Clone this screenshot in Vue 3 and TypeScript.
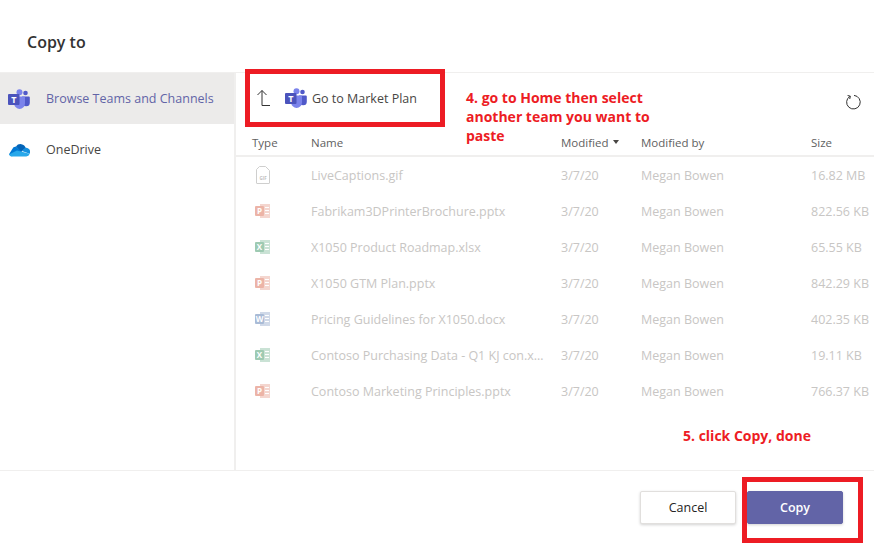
<script setup lang="ts">
type FileKind = "gif" | "ppt" | "xls" | "doc";

interface FileRow {
  kind: FileKind;
  name: string;
  size: string;
}

const files: FileRow[] = [
  { kind: "gif", name: "LiveCaptions.gif", size: "16.82 MB" },
  { kind: "ppt", name: "Fabrikam3DPrinterBrochure.pptx", size: "822.56 KB" },
  { kind: "xls", name: "X1050 Product Roadmap.xlsx", size: "65.55 KB" },
  { kind: "ppt", name: "X1050 GTM Plan.pptx", size: "842.29 KB" },
  { kind: "doc", name: "Pricing Guidelines for X1050.docx", size: "402.35 KB" },
  { kind: "xls", name: "Contoso Purchasing Data - Q1 KJ con.xlsx", size: "19.11 KB" },
  { kind: "ppt", name: "Contoso Marketing Principles.pptx", size: "766.37 KB" },
];

const letter: Record<Exclude<FileKind, "gif">, string> = { ppt: "P", xls: "X", doc: "W" };
const tone: Record<Exclude<FileKind, "gif">, string> = { ppt: "#d24726", xls: "#107c41", doc: "#2b579a" };
</script>

<template>
  <div class="dialog">
    <header class="title">Copy to</header>

    <div class="body">
      <nav class="side">
        <div class="side-item active">
          <svg class="teams" viewBox="0 0 22 20" width="22" height="20">
            <circle cx="17.5" cy="4" r="2.3" fill="#5059c9" />
            <path d="M14 7.5h6.8a1 1 0 0 1 1 1v5.2a3.6 3.6 0 0 1-7.2 0z" fill="#5059c9" />
            <circle cx="11.5" cy="3.2" r="3" fill="#7b83eb" />
            <path d="M6 7.5h10a1 1 0 0 1 1 1v6a5.4 5.4 0 0 1-10.800 0z" fill="#7b83eb" />
            <rect x="0" y="5" width="11.500" height="11" rx="1" fill="#4b53bc" />
            <text x="5.750" y="13.800" class="teams-t">T</text>
          </svg>
          <span>Browse Teams and Channels</span>
        </div>
        <div class="side-item">
          <svg viewBox="0 0 22 16" width="22" height="16">
            <path d="M8 4.500a5.500 5.500 0 0 1 9.800 1.600L13 10z" fill="#0364b8" />
            <path d="M4 7.500a4.500 4.500 0 0 1 4-3l6 5.500-6 4H4a3.500 3.500 0 0 1-3-1.800z" fill="#0078d4" />
            <path d="M17 6a4 4 0 0 1 4.600 5.800L14 9z" fill="#1490df" />
            <path d="M4.500 14.600a3.500 3.500 0 0 1-3.600-2L9 8.500l12.700 3.300a4 4 0 0 1-3.500 2.800z" fill="#28a8ea" />
          </svg>
          <span>OneDrive</span>
        </div>
      </nav>

      <main class="main">
        <div class="toolbar">
          <svg class="up" viewBox="0 0 16 18" width="16" height="18" fill="none" stroke="#333" stroke-width="1">
            <path d="M1.500 6 6 1.500 10.500 6M6 1.500V16.500h8" />
          </svg>
          <svg class="teams" viewBox="0 0 22 20" width="22" height="20">
            <circle cx="17.5" cy="4" r="2.3" fill="#5059c9" />
            <path d="M14 7.500h6.800a1 1 0 0 1 1 1v5.200a3.600 3.600 0 0 1-7.200 0z" fill="#5059c9" />
            <circle cx="11.5" cy="3.2" r="3" fill="#7b83eb" />
            <path d="M6 7.500h10a1 1 0 0 1 1 1v6a5.400 5.400 0 0 1-10.800 0z" fill="#7b83eb" />
            <rect x="0" y="5" width="11.500" height="11" rx="1" fill="#4b53bc" />
            <text x="5.750" y="13.800" class="teams-t">T</text>
          </svg>
          <span class="crumb">Go to Market Plan</span>
          <svg class="refresh" viewBox="0 0 16 16" width="16" height="16" fill="none" stroke="#333" stroke-width="1">
            <path d="M5 2.300A6.800 6.800 0 1 0 9 1.400" />
            <path d="M2.600 1.500 5.400 2.200 4.700 5" />
          </svg>
        </div>

        <div class="grid head">
          <span>Type</span>
          <span>Name</span>
          <span class="sorted">Modified <i class="caret"></i></span>
          <span>Modified by</span>
          <span>Size</span>
        </div>

        <div v-for="file in files" :key="file.name" class="grid row">
          <span class="type">
            <svg v-if="file.kind === 'gif'" viewBox="0 0 16 20" width="16" height="20" fill="none" stroke="#8a8886">
              <path d="M4.500 1.500h6l4 4v12.500a.5.500 0 0 1-.5.500H2a.5.500 0 0 1-.5-.5V4.500z" />
              <text x="8" y="14.500" class="gif-t">GIF</text>
            </svg>
            <svg v-else viewBox="0 0 16 16" width="16" height="16">
              <path d="M5 1h10v14H5z" :fill="tone[file.kind]" opacity=".55" />
              <path d="M10 4h4v1h-4zM10 7h4v1h-4zM10 10h4v1h-4z" fill="#fff" />
              <rect x="0" y="3" width="9" height="10" rx="1" :fill="tone[file.kind]" />
              <text x="4.500" y="10.800" class="doc-t">{{ letter[file.kind] }}</text>
            </svg>
          </span>
          <span class="name">{{ file.name }}</span>
          <span>3/7/20</span>
          <span>Megan Bowen</span>
          <span>{{ file.size }}</span>
        </div>
      </main>
    </div>

    <footer class="footer">
      <button class="btn">Cancel</button>
      <button class="btn primary">Copy</button>
    </footer>

    <div class="mark mark-top"></div>
    <div class="mark mark-copy"></div>
    <p class="note note-top">4. go to Home then select another team you want to paste</p>
    <p class="note note-copy">5. click Copy, done</p>
  </div>
</template>

<style scoped>
.dialog {
  position: relative;
  display: flex;
  flex-direction: column;
  width: 874px;
  height: 553px;
  overflow: hidden;
  background: #fff;
  color: #252423;
  font-family: "Open Sans", "Noto Sans", sans-serif;
  font-size: 12px;
}

.title {
  height: 73px;
  box-sizing: border-box;
  padding: 31px 0 0 27px;
  font-size: 16px;
  line-height: 22px;
  font-weight: 600;
  color: #333;
  border-bottom: 1px solid #f0efee;
}

.body {
  display: flex;
  height: 397px;
}

.side {
  width: 234px;
  flex-shrink: 0;
  border-right: 2px solid #f0efee;
}

.side-item {
  display: flex;
  align-items: center;
  gap: 16px;
  height: 51px;
  padding-left: 8px;
  color: #484644;
  font-size: 12.5px;
}

.side-item.active {
  background: #ecebea;
  color: #6264a7;
}

.side-item svg {
  flex-shrink: 0;
}

.teams-t {
  fill: #fff;
  font-size: 9px;
  font-weight: 700;
  text-anchor: middle;
}

.main {
  flex: 1;
  min-width: 0;
}

.toolbar {
  display: flex;
  align-items: center;
  height: 56px;
  padding: 0 13px 6px 20px;
  box-sizing: border-box;
  color: #484644;
  font-size: 12.5px;
}

.up {
  margin-right: 13px;
}

.crumb {
  margin-left: 5px;
}

.refresh {
  margin-left: auto;
  margin-top: 8px;
}

.grid {
  display: grid;
  grid-template-columns: 59px 250px 80px 170px 1fr;
  padding-left: 16px;
  white-space: nowrap;
}

.head {
  height: 28px;
  align-items: center;
  box-sizing: border-box;
  border-bottom: 2px solid #f0efee;
  color: #616161;
  font-size: 11.5px;
}

.sorted {
  display: flex;
  align-items: center;
  gap: 5px;
}

.caret {
  width: 0;
  height: 0;
  border-left: 3.5px solid transparent;
  border-right: 3.5px solid transparent;
  border-top: 4px solid #484644;
}

.row {
  height: 36px;
  align-items: center;
  color: #c8c6c4;
  font-size: 12.5px;
}

.type {
  display: flex;
  padding-left: 3px;
  opacity: 0.4;
}

.name {
  overflow: hidden;
  text-overflow: ellipsis;
  padding-right: 17px;
}

.gif-t {
  fill: #605e5c;
  stroke: none;
  font-size: 4.5px;
  font-weight: 700;
  text-anchor: middle;
}

.doc-t {
  fill: #fff;
  font-size: 8px;
  font-weight: 700;
  text-anchor: middle;
}

.footer {
  display: flex;
  justify-content: flex-end;
  gap: 11px;
  flex: 1;
  padding: 20px 31px 0 0;
  border-top: 1px solid #f0efee;
}

.btn {
  width: 96px;
  height: 33px;
  border: 1px solid #e1dfdd;
  border-radius: 2px;
  background: #fff;
  color: #252423;
  font: 400 12.5px "Open Sans", "Noto Sans", sans-serif;
  box-shadow: 0 1px 3px rgba(0, 0, 0, 0.18);
}

.btn.primary {
  border-color: #6264a7;
  background: #6264a7;
  color: #fff;
  font-weight: 600;
}

.mark {
  position: absolute;
  box-sizing: border-box;
  border: 5px solid #ed1c24;
}

.mark-top {
  left: 245px;
  top: 69px;
  width: 200px;
  height: 58px;
}

.mark-copy {
  left: 742px;
  top: 477px;
  width: 121px;
  height: 66px;
}

.note {
  position: absolute;
  margin: 0;
  color: #ed1c24;
  font-size: 14px;
  line-height: 19px;
  font-weight: 700;
}

.note-top {
  left: 466px;
  top: 88px;
  width: 215px;
}

.note-copy {
  left: 683px;
  top: 426px;
}
</style>
